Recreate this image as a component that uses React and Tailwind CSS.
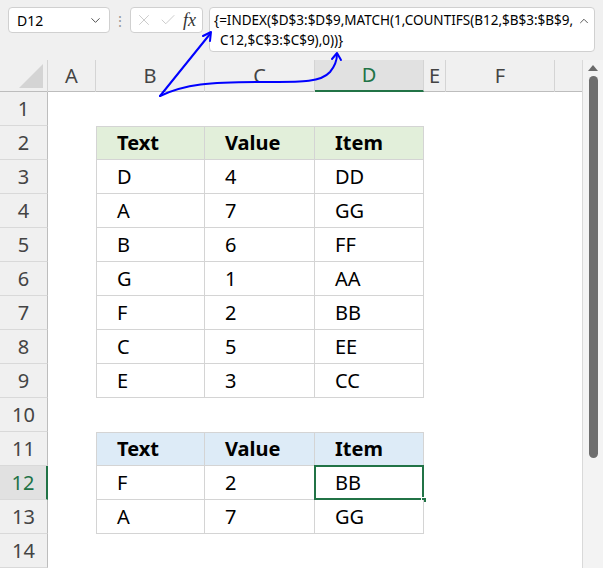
import { ChevronDown, ChevronUp, X, Check } from 'lucide-react';

const font = { fontFamily: '"Noto Sans", "Open Sans", sans-serif' };

const cols = ['A', 'B', 'C', 'D', 'E', 'F', ''];
const colW = 'grid grid-cols-[48px_48px_109px_110px_109px_22px_109px_27px]';

const table1 = [
  ['Text', 'Value', 'Item'],
  ['D', '4', 'DD'],
  ['A', '7', 'GG'],
  ['B', '6', 'FF'],
  ['G', '1', 'AA'],
  ['F', '2', 'BB'],
  ['C', '5', 'EE'],
  ['E', '3', 'CC'],
];

const table2 = [
  ['Text', 'Value', 'Item'],
  ['F', '2', 'BB'],
  ['A', '7', 'GG'],
];

const rowData = (n) => {
  if (n >= 2 && n <= 9) return { cells: table1[n - 2], head: n === 2, color: 'bg-[#e2efda]', first: n === 2 };
  if (n >= 11 && n <= 13) return { cells: table2[n - 11], head: n === 11, color: 'bg-[#ddebf7]', first: n === 11 };
  return null;
};

const Cell = ({ text, head, color, first, left, selected }) => (
  <div
    className={`relative h-[34px] flex items-center pl-5 text-[20px] text-black border-r border-b border-[#d4d4d4] ${
      first ? 'border-t' : ''
    } ${left ? 'border-l' : ''} ${head ? `font-bold ${color}` : 'bg-white'}`}
  >
    {text}
    {selected && (
      <>
        <div className="absolute -left-px -top-px -right-px -bottom-px border-2 border-[#217346]" />
        <div className="absolute -right-[4px] -bottom-[4px] w-[6px] h-[6px] bg-[#217346] border border-white" />
      </>
    )}
  </div>
);

const Row = ({ n }) => {
  const d = rowData(n);
  const sel = n === 12;
  return (
    <div className={`${colW} h-[34px]`}>
      <div
        className={`h-[34px] flex items-center justify-center text-[20px] border-b border-[#d9d9d9] ${
          sel ? 'bg-[#e1e1e1] text-[#217346] border-r-2 border-r-[#217346]' : 'bg-[#f0f0f0] text-[#444] border-r border-r-[#bdbdbd]'
        }`}
      >
        {n}
      </div>
      <div className="bg-white" />
      {d ? (
        <>
          <Cell text={d.cells[0]} head={d.head} color={d.color} first={d.first} left />
          <Cell text={d.cells[1]} head={d.head} color={d.color} first={d.first} />
          <Cell text={d.cells[2]} head={d.head} color={d.color} first={d.first} selected={sel} />
        </>
      ) : (
        <>
          <div className="bg-white" />
          <div className="bg-white" />
          <div className="bg-white" />
        </>
      )}
      <div className="bg-white" />
      <div className="bg-white" />
      <div className="bg-white" />
    </div>
  );
};

export default function App() {
  return (
    <div className="relative w-[603px] h-[568px] overflow-hidden bg-[#f0f0f0]" style={font}>
      {/* formula bar */}
      <div className="flex items-start h-[60px] pt-[7px] pl-2">
        <div className="w-[102px] h-[26px] bg-white border border-[#d0d0d0] rounded-[4px] flex items-center justify-between pl-2 pr-1.5 text-[14px] text-black">
          D12
          <ChevronDown size={15} strokeWidth={1.5} className="text-[#444]" />
        </div>
        <div className="w-[20px] h-[26px] flex items-center justify-center text-[#999] text-[14px]">⋮</div>
        <div className="w-[73px] h-[26px] bg-white border border-[#d0d0d0] rounded-[4px] flex items-center justify-between pl-1 pr-1.5">
          <X size={18} strokeWidth={1} className="text-[#bbb]" />
          <Check size={18} strokeWidth={1} className="text-[#bbb]" />
          <span className="text-[18px] italic text-[#333]" style={{ fontFamily: '"Liberation Serif", serif' }}>
            fx
          </span>
        </div>
        <div className="ml-[6px] w-[386px] h-[45px] bg-white border border-[#d0d0d0] rounded-[4px] relative pl-[4px] pt-[2px] text-[13.5px] leading-[20px] text-black">
          <div>{'{=INDEX($D$3:$D$9,MATCH(1,COUNTIFS(B12,$B$3:$B$9,'}</div>
          <div className="pl-[6px]">{'C12,$C$3:$C$9),0))}'}</div>
          <ChevronUp size={14} strokeWidth={1.5} className="absolute right-[3px] top-[6px] text-[#444]" />
        </div>
      </div>

      <div className="flex">
        <div className="w-[582px]">
          {/* column headers */}
          <div className={`${colW} h-[32px] border-b border-[#bdbdbd]`}>
            <div className="relative border-r border-[#d4d4d4]">
              <div className="absolute right-[4px] bottom-[4px] w-0 h-0 border-l-[24px] border-l-transparent border-b-[24px] border-b-[#d4d4d4]" />
            </div>
            {cols.map((c, i) => (
              <div
                key={i}
                className={`flex items-center justify-center text-[20px] ${
                  c === 'D' ? 'bg-[#e1e1e1] text-[#217346] border-b-2 border-[#217346]' : 'text-[#444]'
                } ${i < 6 ? 'border-r border-r-[#d4d4d4]' : ''}`}
              >
                {c}
              </div>
            ))}
          </div>
          {Array.from({ length: 14 }, (_, i) => (
            <Row key={i} n={i + 1} />
          ))}
        </div>
        {/* scrollbar */}
        <div className="relative w-[21px] border-l border-[#d9d9d9] bg-[#f3f3f3] h-[508px] flex flex-col items-center pt-[5px]">
          <div className="w-0 h-0 border-l-[5px] border-l-transparent border-r-[5px] border-r-transparent border-b-[6px] border-b-[#6b6b6b]" />
          <div className="mt-[5px] w-[9px] h-[382px] rounded-full bg-[#6e6e6e]" />
        </div>
      </div>

      {/* annotation arrows */}
      <svg className="absolute left-0 top-0 pointer-events-none" width="603" height="568">
        <g fill="none" stroke="#0000ff" strokeWidth="2" strokeLinecap="round" strokeLinejoin="round">
          <path d="M160 96 L210 34" />
          <path d="M203 36 L211 32 L210 41" />
          <path d="M160 96 C185 84 210 82 260 82 C300 82 320 83 330 72 C335 66 337 60 337 54" />
          <path d="M332 59 L337 53 L341 60" />
        </g>
      </svg>
    </div>
  );
}
